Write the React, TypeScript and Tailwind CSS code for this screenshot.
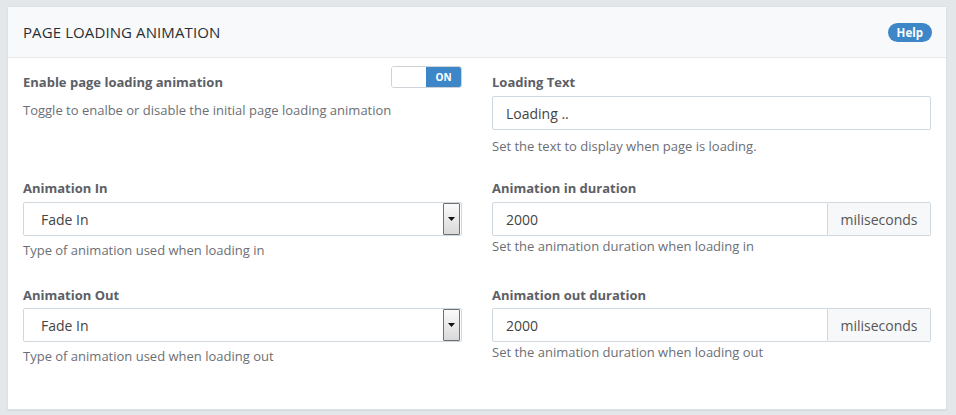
import React from 'react';

const Label: React.FC<{ children: React.ReactNode }> = ({ children }) => (
    <div className="text-[13px] font-bold text-[#5c6066] leading-[18px]">{children}</div>
);

const Hint: React.FC<{ children: React.ReactNode }> = ({ children }) => (
    <div className="text-[13px] text-[#6b6f75] leading-[18px]">{children}</div>
);

const SelectBox: React.FC<{ value: string }> = ({ value }) => (
    <div className="h-[34px] border border-[#cfd7df] rounded-[2px] bg-white flex items-center justify-between pl-[17px] pr-[1px]">
        <span className="text-[14px] text-[#444]">{value}</span>
        <div className="w-[17px] h-[32px] border border-[#707070] bg-gradient-to-b from-[#fbfbfb] to-[#d9d9d9] flex items-center justify-center rounded-[1px]">
            <svg width="7" height="4" viewBox="0 0 7 4"><path d="M0 0h7L3.5 4z" fill="#111" /></svg>
        </div>
    </div>
);

const Duration: React.FC<{ value: string }> = ({ value }) => (
    <div className="h-[34px] flex">
        <div className="flex-1 border border-[#cfd7df] rounded-l-[2px] bg-white flex items-center px-[13px] text-[14px] text-[#444]">{value}</div>
        <div className="w-[103px] border border-l-0 border-[#cfd7df] bg-[#f6f8fa] rounded-r-[2px] flex items-center justify-center text-[14px] text-[#555]">miliseconds</div>
    </div>
);

export default function App() {
    return (
        <div className="min-h-[415px] bg-[#e4e7ea] pt-[6px] px-[7px] pb-[7px]" style={{ fontFamily: '"Open Sans", sans-serif' }}>
            <div className="bg-white border border-[#dde1e5] rounded-[2px] shadow-[0_1px_1px_rgba(0,0,0,0.06)] w-[940px]">
                <div className="h-[51px] bg-[#f8f9fb] border-b border-[#e7eaed] flex items-center justify-between pl-[15px] pr-[14px]">
                    <h3 className="text-[15px] text-[#2b2f34] font-medium tracking-[0.1px] mt-[1px]">PAGE LOADING ANIMATION</h3>
                    <span className="bg-[#3d87c9] text-white text-[11.5px] font-bold rounded-full px-[9px] leading-[19px]">Help</span>
                </div>
                <div className="grid grid-cols-2 gap-x-[30px] px-[15px] pt-[15px] pb-[44px]">
                    <div className="h-[106px]">
                        <div className="flex items-start justify-between">
                            <Label>Enable page loading animation</Label>
                            <div className="w-[71px] h-[22px] border border-[#cfd3d7] rounded-[3px] flex mt-[-7px] overflow-hidden">
                                <div className="flex-1 bg-white" />
                                <div className="w-[35px] bg-[#3d87c9] text-white text-[10px] font-bold flex items-center justify-center">ON</div>
                            </div>
                        </div>
                        <div className="mt-[10px]"><Hint>Toggle to enalbe or disable the initial page loading animation</Hint></div>
                    </div>
                    <div className="h-[106px]">
                        <Label>Loading Text</Label>
                        <div className="mt-[5px] h-[34px] border border-[#cfd7df] rounded-[2px] flex items-center px-[13px] text-[14px] text-[#444]">Loading ..</div>
                        <div className="mt-[7px]"><Hint>Set the text to display when page is loading.</Hint></div>
                    </div>
                    <div className="h-[107px]">
                        <Label>Animation In</Label>
                        <div className="mt-[5px]"><SelectBox value="Fade In" /></div>
                        <div className="mt-[5px]"><Hint>Type of animation used when loading in</Hint></div>
                    </div>
                    <div className="h-[107px]">
                        <Label>Animation in duration</Label>
                        <div className="mt-[5px]"><Duration value="2000" /></div>
                        <div className="mt-[1px]"><Hint>Set the animation duration when loading in</Hint></div>
                    </div>
                    <div>
                        <Label>Animation Out</Label>
                        <div className="mt-[4px]"><SelectBox value="Fade In" /></div>
                        <div className="mt-[5px]"><Hint>Type of animation used when loading out</Hint></div>
                    </div>
                    <div>
                        <Label>Animation out duration</Label>
                        <div className="mt-[4px]"><Duration value="2000" /></div>
                        <div className="mt-[1px]"><Hint>Set the animation duration when loading out</Hint></div>
                    </div>
                </div>
            </div>
        </div>
    );
}
